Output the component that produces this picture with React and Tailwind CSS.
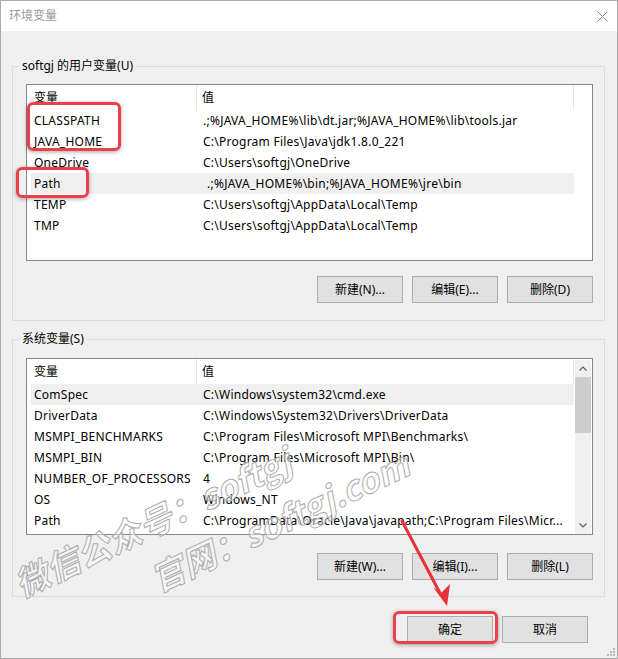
import React from "react";

const userVars = [
  ["CLASSPATH", ".;%JAVA_HOME%\\lib\\dt.jar;%JAVA_HOME%\\lib\\tools.jar"],
  ["JAVA_HOME", "C:\\Program Files\\Java\\jdk1.8.0_221"],
  ["OneDrive", "C:\\Users\\softgj\\OneDrive"],
  ["Path", ".;%JAVA_HOME%\\bin;%JAVA_HOME%\\jre\\bin", true],
  ["TEMP", "C:\\Users\\softgj\\AppData\\Local\\Temp"],
  ["TMP", "C:\\Users\\softgj\\AppData\\Local\\Temp"],
];

const sysVars = [
  ["ComSpec", "C:\\Windows\\system32\\cmd.exe"],
  ["DriverData", "C:\\Windows\\System32\\Drivers\\DriverData"],
  ["MSMPI_BENCHMARKS", "C:\\Program Files\\Microsoft MPI\\Benchmarks\\"],
  ["MSMPI_BIN", "C:\\Program Files\\Microsoft MPI\\Bin\\"],
  ["NUMBER_OF_PROCESSORS", "4"],
  ["OS", "Windows_NT"],
  ["Path", "C:\\ProgramData\\Oracle\\Java\\javapath;C:\\Program Files\\Micr..."],
];

// little chevrons for the scrollbar
function Chevron({ down }) {
  return (
    <svg width="8" height="5" viewBox="0 0 8 5">
      <path
        d={down ? "M0.5 0.5 L4 4 L7.5 0.5" : "M0.5 4.5 L4 1 L7.5 4.5"}
        fill="none"
        stroke="#606060"
        strokeWidth="1.2"
      />
    </svg>
  );
}

function Scrollbar() {
  return (
    <div className="mt-[1px] mr-[1px] flex w-[16px] flex-col bg-[#f0f0f0]">
      <div className="flex h-[17px] items-center justify-center">
        <Chevron />
      </div>
      <div className="h-[56px] bg-[#cdcdcd]" />
      <div className="flex-1" />
      <div className="flex h-[17px] items-center justify-center">
        <Chevron down />
      </div>
    </div>
  );
}

function VarList({ rows, selected, scroll }) {
  return (
    <div className="flex h-[177px] border border-[#828790] bg-white">
      <div className="flex w-[548px] flex-col pl-[4px]">
        {/* HEADER */}
        <div className="flex h-[25px] w-[543px] items-center">
          <div className="flex h-full w-[166px] items-center border-r border-[#e5e5e5] pl-[3px]">
            变量
          </div>
          <div className="flex h-full w-[377px] items-center border-r border-[#e5e5e5] pl-[5px]">
            值
          </div>
        </div>
        {/* ROWS */}
        {rows.map(([name, value, shifted], i) => (
          <div
            key={name + i}
            className={`flex h-[21px] w-[543px] items-center whitespace-nowrap tracking-[0.25px] ${
              i === selected ? "bg-[#f0f0f0]" : ""
            }`}
          >
            <div className="w-[166px] overflow-hidden pl-[3px]">{name}</div>
            <div
              className={`w-[377px] overflow-hidden ${
                shifted ? "pl-[10px]" : "pl-[6px]"
              }`}
            >
              {value}
            </div>
          </div>
        ))}
      </div>
      <div className="flex-1" />
      {scroll && <Scrollbar />}
    </div>
  );
}

function Button({ children }) {
  return (
    <div className="flex h-[27px] w-[86px] items-center justify-center border border-[#adadad] bg-[#e1e1e1]">
      {children}
    </div>
  );
}

function Group({ label, children, className }) {
  return (
    <div
      className={`relative ml-[11px] w-[593px] border border-[#dcdcdc] pl-[13px] pr-[11px] ${className}`}
    >
      <span className="absolute -top-[9px] left-[6px] bg-[#f0f0f0] px-[3px] leading-[16px]">
        {label}
      </span>
      {children}
    </div>
  );
}

export default function App() {
  return (
    <div className="relative flex h-[659px] w-[618px] flex-col overflow-hidden border border-[#aaaaaa] bg-[#f0f0f0] font-['Noto_Sans','Noto_Sans_CJK_SC',sans-serif] text-[12px] text-black">
      {/* TITLE BAR */}
      <div className="flex h-[30px] items-center justify-between bg-white pl-[8px] pr-[9px]">
        <span className="text-[#999999]">环境变量</span>
        <svg width="11" height="11" viewBox="0 0 11 11">
          <path d="M0.5 0.5 L10.5 10.5 M10.5 0.5 L0.5 10.5" stroke="#8a8a8a" strokeWidth="1" />
        </svg>
      </div>

      {/* USER VARIABLES */}
      <Group label="softgj 的用户变量(U)" className="mt-[35px] pt-[17px] pb-[17px]">
        <VarList rows={userVars} selected={3} />
        <div className="mt-[15px] flex justify-end gap-[9px]">
          <Button>新建(N)...</Button>
          <Button>编辑(E)...</Button>
          <Button>删除(D)</Button>
        </div>
      </Group>

      {/* SYSTEM VARIABLES */}
      <Group label="系统变量(S)" className="mt-[18px] pt-[18px] pb-[16px]">
        <VarList rows={sysVars} selected={0} scroll />
        <div className="mt-[18px] flex justify-end gap-[9px]">
          <Button>新建(W)...</Button>
          <Button>编辑(I)...</Button>
          <Button>删除(L)</Button>
        </div>
      </Group>

      {/* OK / CANCEL */}
      <div className="mt-[19px] flex justify-end gap-[9px] pr-[29px]">
        <Button>确定</Button>
        <Button>取消</Button>
      </div>

      {/* resize grip */}
      <svg className="absolute bottom-[1px] right-[1px]" width="10" height="10" viewBox="0 0 10 10">
        {[
          [7, 1],
          [4, 4],
          [7, 4],
          [1, 7],
          [4, 7],
          [7, 7],
        ].map(([x, y]) => (
          <rect key={x + "-" + y} x={x} y={y} width="2" height="2" fill="#b8b8b8" />
        ))}
      </svg>

      {/* WATERMARK */}
      <div className="pointer-events-none absolute left-[15px] top-[566px] origin-[0_50%] -rotate-[25deg] whitespace-nowrap font-['Noto_Sans_CJK_SC',sans-serif] text-[34px] font-bold italic leading-[36px] text-[rgba(255,255,255,0.45)] [-webkit-text-stroke:1px_#adadad]">
        微信公众号：softgj
      </div>
      <div className="pointer-events-none absolute left-[151px] top-[561px] origin-[0_50%] -rotate-[25deg] whitespace-nowrap font-['Noto_Sans_CJK_SC',sans-serif] text-[34px] font-bold italic leading-[36px] text-[rgba(255,255,255,0.45)] [-webkit-text-stroke:1px_#adadad]">
        官网：softgj.com
      </div>

      {/* RED ANNOTATIONS */}
      <div className="pointer-events-none absolute left-[26px] top-[101px] h-[49px] w-[94px] rounded-[6px] border-[3px] border-[#e8414a] shadow-[0_1px_4px_rgba(0,0,0,0.35)]" />
      <div className="pointer-events-none absolute left-[15px] top-[166px] h-[31px] w-[73px] rounded-[6px] border-[3px] border-[#e8414a] shadow-[0_1px_4px_rgba(0,0,0,0.35)]" />
      <div className="pointer-events-none absolute left-[392px] top-[610px] h-[33px] w-[105px] rounded-[6px] border-[3px] border-[#e8414a] shadow-[0_1px_4px_rgba(0,0,0,0.35)]" />

      <svg className="pointer-events-none absolute left-0 top-0" width="618" height="659" viewBox="0 0 618 659">
        <line x1="401" y1="520" x2="440" y2="594" stroke="#e8313a" strokeWidth="3" strokeLinecap="round" />
        <polygon points="446,605 432,586 440,592 449,583" fill="#e8313a" />
      </svg>
    </div>
  );
}
